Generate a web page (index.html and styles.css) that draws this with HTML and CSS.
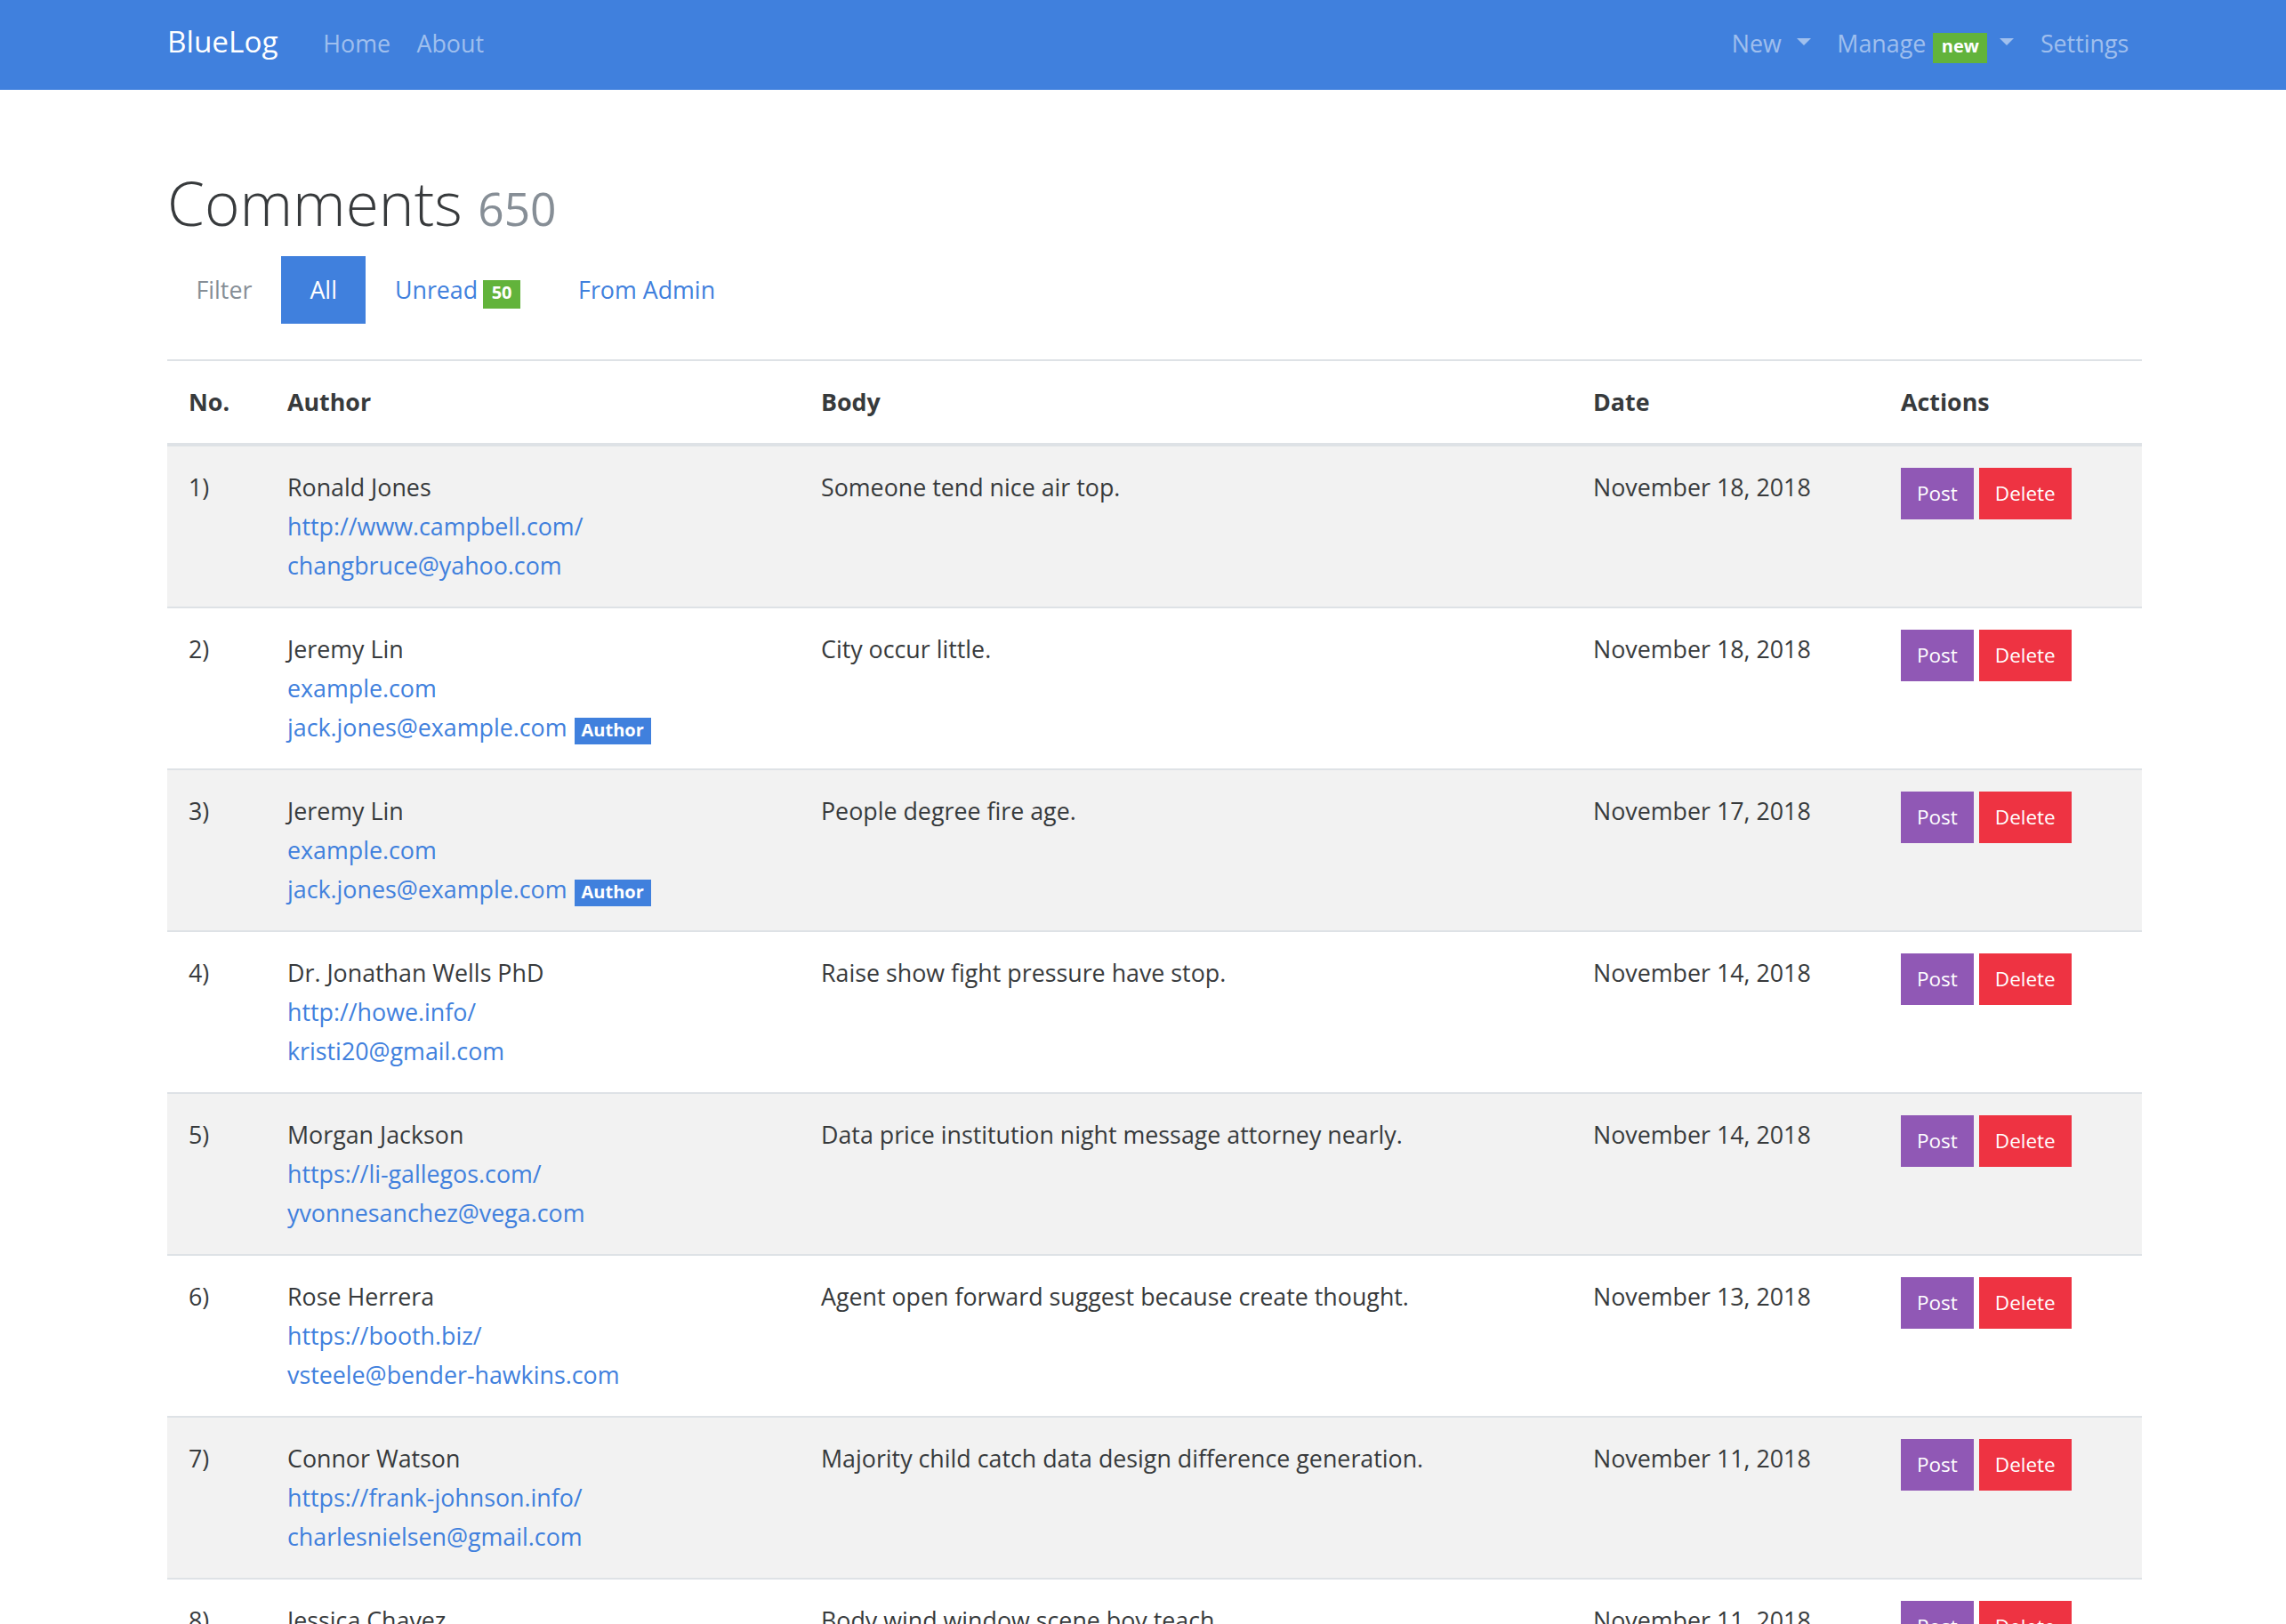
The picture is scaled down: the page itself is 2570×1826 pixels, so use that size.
FILE: index.html
```html
<!DOCTYPE html>
<html lang="en">
<head>
<meta charset="utf-8">
<title>Comments - BlueLog</title>
<link rel="stylesheet" href="styles.css">
</head>
<body>
<nav class="navbar">
  <div class="container nav-inner">
    <a class="brand" href="#">BlueLog</a>
    <ul class="nav-links">
      <li><a class="nav-link" href="#">Home</a></li>
      <li><a class="nav-link" href="#">About</a></li>
    </ul>
    <ul class="nav-links nav-right">
      <li><a class="nav-link" href="#">New<span class="caret"></span></a></li>
      <li><a class="nav-link" href="#">Manage<span class="badge badge-success badge-nav">new</span><span class="caret"></span></a></li>
      <li><a class="nav-link" href="#">Settings</a></li>
    </ul>
  </div>
</nav>

<main class="container main">
  <h1 class="page-title">Comments <small class="count">650</small></h1>

  <ul class="filter-nav">
    <li><span class="pill pill-label">Filter</span></li>
    <li><a class="pill active" href="#">All</a></li>
    <li><a class="pill" href="#">Unread<span class="badge badge-success badge-pill-count">50</span></a></li>
    <li><a class="pill" href="#">From Admin</a></li>
  </ul>

  <table class="comments">
    <colgroup>
      <col class="c-no">
      <col class="c-author">
      <col class="c-body">
      <col class="c-date">
      <col class="c-actions">
    </colgroup>
    <thead>
      <tr><th>No.</th><th>Author</th><th>Body</th><th>Date</th><th>Actions</th></tr>
    </thead>
    <tbody>
      <tr>
        <td>1)</td>
        <td><div>Ronald Jones</div><div><a href="#">http://www.campbell.com/</a></div><div><a href="#">changbruce@yahoo.com</a></div></td>
        <td>Someone tend nice air top.</td>
        <td>November 18, 2018</td>
        <td><div class="actions"><a class="btn btn-post" href="#">Post</a><a class="btn btn-delete" href="#">Delete</a></div></td>
      </tr>
      <tr>
        <td>2)</td>
        <td><div>Jeremy Lin</div><div><a href="#">example.com</a></div><div><a href="#">jack.jones@example.com</a><span class="badge badge-primary badge-author">Author</span></div></td>
        <td>City occur little.</td>
        <td>November 18, 2018</td>
        <td><div class="actions"><a class="btn btn-post" href="#">Post</a><a class="btn btn-delete" href="#">Delete</a></div></td>
      </tr>
      <tr>
        <td>3)</td>
        <td><div>Jeremy Lin</div><div><a href="#">example.com</a></div><div><a href="#">jack.jones@example.com</a><span class="badge badge-primary badge-author">Author</span></div></td>
        <td>People degree fire age.</td>
        <td>November 17, 2018</td>
        <td><div class="actions"><a class="btn btn-post" href="#">Post</a><a class="btn btn-delete" href="#">Delete</a></div></td>
      </tr>
      <tr>
        <td>4)</td>
        <td><div>Dr. Jonathan Wells PhD</div><div><a href="#">http://howe.info/</a></div><div><a href="#">kristi20@gmail.com</a></div></td>
        <td>Raise show fight pressure have stop.</td>
        <td>November 14, 2018</td>
        <td><div class="actions"><a class="btn btn-post" href="#">Post</a><a class="btn btn-delete" href="#">Delete</a></div></td>
      </tr>
      <tr>
        <td>5)</td>
        <td><div>Morgan Jackson</div><div><a href="#">https://li-gallegos.com/</a></div><div><a href="#">yvonnesanchez@vega.com</a></div></td>
        <td>Data price institution night message attorney nearly.</td>
        <td>November 14, 2018</td>
        <td><div class="actions"><a class="btn btn-post" href="#">Post</a><a class="btn btn-delete" href="#">Delete</a></div></td>
      </tr>
      <tr>
        <td>6)</td>
        <td><div>Rose Herrera</div><div><a href="#">https://booth.biz/</a></div><div><a href="#">vsteele@bender-hawkins.com</a></div></td>
        <td>Agent open forward suggest because create thought.</td>
        <td>November 13, 2018</td>
        <td><div class="actions"><a class="btn btn-post" href="#">Post</a><a class="btn btn-delete" href="#">Delete</a></div></td>
      </tr>
      <tr>
        <td>7)</td>
        <td><div>Connor Watson</div><div><a href="#">https://frank-johnson.info/</a></div><div><a href="#">charlesnielsen@gmail.com</a></div></td>
        <td>Majority child catch data design difference generation.</td>
        <td>November 11, 2018</td>
        <td><div class="actions"><a class="btn btn-post" href="#">Post</a><a class="btn btn-delete" href="#">Delete</a></div></td>
      </tr>
      <tr>
        <td>8)</td>
        <td><div>Jessica Chavez</div></td>
        <td>Body wind window scene boy teach.</td>
        <td>November 11, 2018</td>
        <td><div class="actions"><a class="btn btn-post" href="#">Post</a><a class="btn btn-delete" href="#">Delete</a></div></td>
      </tr>
    </tbody>
  </table>
</main>
</body>
</html>
```

FILE: styles.css
```css
html, body {
  margin: 0;
  padding: 0;
}

body {
  font-family: "Open Sans", "Noto Sans", sans-serif;
  font-size: 26.8px;
  line-height: 44px;
  color: #373a3c;
  background: #ffffff;
}

a {
  color: #4080dd;
  text-decoration: none;
}

ul {
  list-style: none;
  margin: 0;
  padding: 0;
}

.container {
  width: 2220px;
  margin-left: 188px;
}

/* ---------- navbar ---------- */
.navbar {
  background: #4080dd;
  height: 101px;
}

.nav-inner {
  display: flex;
  align-items: baseline;
  padding-top: 24px;
}

.brand {
  color: #ffffff;
  font-size: 33.3px;
  line-height: 44px;
  margin-right: 36px;
}

.nav-links {
  display: flex;
  align-items: baseline;
}

.nav-right {
  margin-left: auto;
}

.nav-link {
  display: inline-block;
  padding: 0 14.75px;
  color: rgba(255, 255, 255, 0.5);
  line-height: 44px;
}

.caret {
  display: inline-block;
  width: 0;
  height: 0;
  margin-left: 17px;
  vertical-align: 8px;
  border-top: 8px solid currentColor;
  border-left: 8px solid transparent;
  border-right: 8px solid transparent;
}

.badge + .caret {
  margin-left: 14px;
}

/* ---------- badges ---------- */
.badge {
  display: inline-block;
  font-size: 20px;
  font-weight: 700;
  line-height: 20px;
  color: #ffffff;
  padding: 4px 9.5px 8px;
}

.badge-success {
  background: #62b33b;
}

.badge-primary {
  background: #4080dd;
}

.badge-nav {
  margin-left: 8px;
  padding: 5.5px 9.5px 8.5px;
}

.badge-pill-count {
  margin-left: 6px;
}

.badge-author {
  margin-left: 8px;
  padding: 4px 8px 6px;
}

/* ---------- heading ---------- */
.main {
  padding-top: 83px;
}

.page-title {
  margin: 0 0 16px;
  font-size: 67.5px;
  font-weight: 300;
  line-height: 88px;
  color: #373a3c;
}

.count {
  font-size: 51.5px;
  font-weight: 400;
  line-height: 1;
  color: #868e96;
}

/* ---------- filter ---------- */
.filter-nav {
  display: flex;
  margin-bottom: 40px;
}

.pill {
  display: block;
  padding: 16px 32.5px;
  line-height: 44px;
}

.pill-label {
  color: #868e96;
}

.pill.active {
  background: #4080dd;
  color: #ffffff;
}

/* ---------- table ---------- */
.comments {
  width: 2220px;
  table-layout: fixed;
  border-collapse: separate;
  border-spacing: 0;
}

.c-no { width: 111px; }
.c-author { width: 600px; }
.c-body { width: 868px; }
.c-date { width: 346px; }
.c-actions { width: 295px; }

.comments th {
  text-align: left;
  font-weight: 700;
  padding: 24px 24px;
  line-height: 44px;
  border-top: 2px solid #dee2e6;
  border-bottom: 2px solid #dee2e6;
  vertical-align: bottom;
}

.comments td {
  padding: 24px 24px;
  line-height: 44px;
  border-top: 2px solid #dee2e6;
  vertical-align: top;
}

.comments tbody tr:nth-child(odd) td {
  background: #f2f2f2;
}

/* ---------- buttons ---------- */
.actions {
  display: flex;
  gap: 6px;
}

.btn {
  display: block;
  height: 58px;
  padding: 0 18px;
  font-size: 22.5px;
  line-height: 58px;
  color: #ffffff;
}

.btn-post {
  background: #9058b5;
}

.btn-delete {
  background: #ee3342;
}
```
